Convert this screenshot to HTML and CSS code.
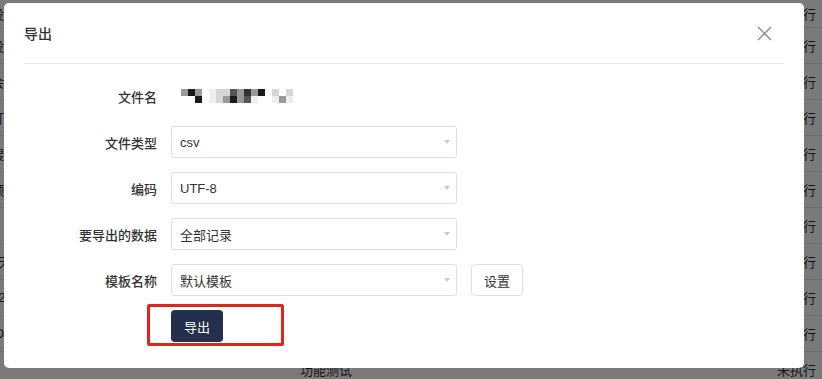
FILE: index.html
```html
<!DOCTYPE html>
<html lang="zh-CN">
<head>
  <meta charset="UTF-8" />
  <title>导出</title>
  <link rel="stylesheet" href="styles.css">
</head>
<body>

<div class="table">
  <div class="row first"><span class="c-name">设计</span><span class="c-type">功能测试</span><span class="c-status">未执行</span></div>
  <div class="row"><span class="c-name">设置</span><span class="c-type">功能测试</span><span class="c-status">未执行</span></div>
  <div class="row"><span class="c-name">会员</span><span class="c-type">功能测试</span><span class="c-status">未执行</span></div>
  <div class="row"><span class="c-name">订单</span><span class="c-type">功能测试</span><span class="c-status">未执行</span></div>
  <div class="row"><span class="c-name">搜索</span><span class="c-type">功能测试</span><span class="c-status">未执行</span></div>
  <div class="row"><span class="c-name">预约</span><span class="c-type">功能测试</span><span class="c-status">未执行</span></div>
  <div class="row"><span class="c-name">、</span><span class="c-type">功能测试</span><span class="c-status">未执行</span></div>
  <div class="row"><span class="c-name">7天</span><span class="c-type">功能测试</span><span class="c-status">未执行</span></div>
  <div class="row"><span class="c-name">o2o</span><span class="c-type">功能测试</span><span class="c-status">未执行</span></div>
  <div class="row"><span class="c-name">iOS</span><span class="c-type">功能测试</span><span class="c-status">未执行</span></div>
  <div class="row"><span class="c-name"></span><span class="c-type">功能测试</span><span class="c-status">未执行</span></div>
</div>

<div class="mask"></div>

<div class="dialog">
  <div class="dlg-head">
    <span class="dlg-title">导出</span>
    <svg class="close" width="15" height="15" viewBox="0 0 15 15">
      <path d="M1 1 L14 14 M14 1 L1 14" stroke="#8a90a0" stroke-width="1.5" fill="none"/>
    </svg>
  </div>

  <div class="dlg-body">
    <div class="item">
      <label class="label">文件名</label>
      <div class="mosaic">
        <i class="m2"></i><i class="m5"></i><i class="m2"></i><i></i><i class="m0"></i><i class="m1"></i><i class="m1"></i><i class="m3"></i><i class="m2"></i><i class="m4"></i><i class="m2"></i><i class="m5"></i><i></i><i class="m1"></i><i></i><i class="m1"></i>
        <i></i><i></i><i class="m5"></i><i></i><i class="m0"></i><i class="m1"></i><i class="m2"></i><i class="m5"></i><i class="m2"></i><i class="m3"></i><i class="m0"></i><i></i><i></i><i class="m0"></i><i class="m2"></i><i class="m0"></i>
      </div>
    </div>

    <div class="item">
      <label class="label">文件类型</label>
      <div class="select"><span>csv</span><span class="arrow"></span></div>
    </div>

    <div class="item">
      <label class="label">编码</label>
      <div class="select"><span>UTF-8</span><span class="arrow"></span></div>
    </div>

    <div class="item">
      <label class="label">要导出的数据</label>
      <div class="select"><span>全部记录</span><span class="arrow"></span></div>
    </div>

    <div class="item">
      <label class="label">模板名称</label>
      <div class="select"><span>默认模板</span><span class="arrow"></span></div>
      <button class="btn-plain">设置</button>
    </div>

    <div class="item actions">
      <button class="btn-primary">导出</button>
      <div class="highlight"></div>
    </div>
  </div>
</div>

</body>
</html>
```

FILE: styles.css
```css
body {
  margin: 0;
  font-family: "Liberation Sans", "Noto Sans CJK SC", sans-serif;
  color: #333;
  overflow: hidden;
  background: #fff;
}
.table {
  width: 822px;
}
.row {
  display: flex;
  align-items: center;
  height: 36px;
  box-sizing: border-box;
  border-bottom: 1px solid #e6e6e6;
  font-size: 13px;
}
.row.first {
  height: 28px;
}
.c-name {
  width: 300px;
  text-indent: -9px;
}
.c-type {
  flex: 1;
}
.c-status {
  padding-right: 6px;
}
.mask {
  position: fixed;
  inset: 0;
  background: rgba(0, 0, 0, 0.52);
}
.dialog {
  position: fixed;
  left: 4px;
  top: 3px;
  width: 800px;
  background: #fff;
  border-radius: 5px;
}
.dlg-head {
  height: 60px;
  margin: 0 20px;
  border-bottom: 1px solid #e8e8e8;
  display: flex;
  align-items: center;
  justify-content: space-between;
}
.dlg-title {
  font-size: 14px;
  font-weight: 500;
  color: #303133;
}
.close {
  margin-right: 12px;
}
.dlg-body {
  padding: 16px 20px 26px;
}
.item {
  display: flex;
  align-items: center;
  height: 32px;
  margin-bottom: 14px;
}
.item.actions {
  margin-bottom: 0;
  position: relative;
}
.label {
  width: 147px;
  box-sizing: border-box;
  padding-right: 14px;
  text-align: right;
  font-size: 13px;
  font-weight: 500;
  color: #333;
}
.mosaic {
  display: grid;
  grid-template-columns: repeat(16, 7px);
  grid-auto-rows: 7px;
  margin-left: 10px;
  margin-top: -1px;
}
.mosaic i {
  background: #fff;
}
.mosaic .m0 { background: #eeeeee; }
.mosaic .m1 { background: #d6d6d6; }
.mosaic .m2 { background: #999999; }
.mosaic .m3 { background: #555555; }
.mosaic .m4 { background: #333333; }
.mosaic .m5 { background: #1a1a1a; }
.select {
  width: 286px;
  height: 32px;
  box-sizing: border-box;
  border: 1px solid #dcdfe6;
  border-radius: 3px;
  padding: 0 6px 0 8px;
  display: flex;
  align-items: center;
  justify-content: space-between;
  font-size: 13px;
  color: #333;
}
.arrow {
  width: 0;
  height: 0;
  border-left: 3.5px solid transparent;
  border-right: 3.5px solid transparent;
  border-top: 4px solid #c8cad0;
}
.btn-plain {
  margin-left: 14px;
  width: 52px;
  height: 32px;
  border: 1px solid #dcdfe6;
  border-radius: 4px;
  background: #fff;
  font-family: inherit;
  font-size: 13px;
  color: #333;
  padding: 0;
}
.btn-primary {
  margin-left: 147px;
  width: 52px;
  height: 32px;
  border: none;
  border-radius: 4px;
  background: #232f4c;
  color: #fff;
  font-family: inherit;
  font-size: 13px;
  padding: 0;
}
.highlight {
  position: absolute;
  left: 123px;
  top: -6px;
  width: 137px;
  height: 42px;
  box-sizing: border-box;
  border: 3px solid #e0261c;
  border-radius: 2px;
}
```
